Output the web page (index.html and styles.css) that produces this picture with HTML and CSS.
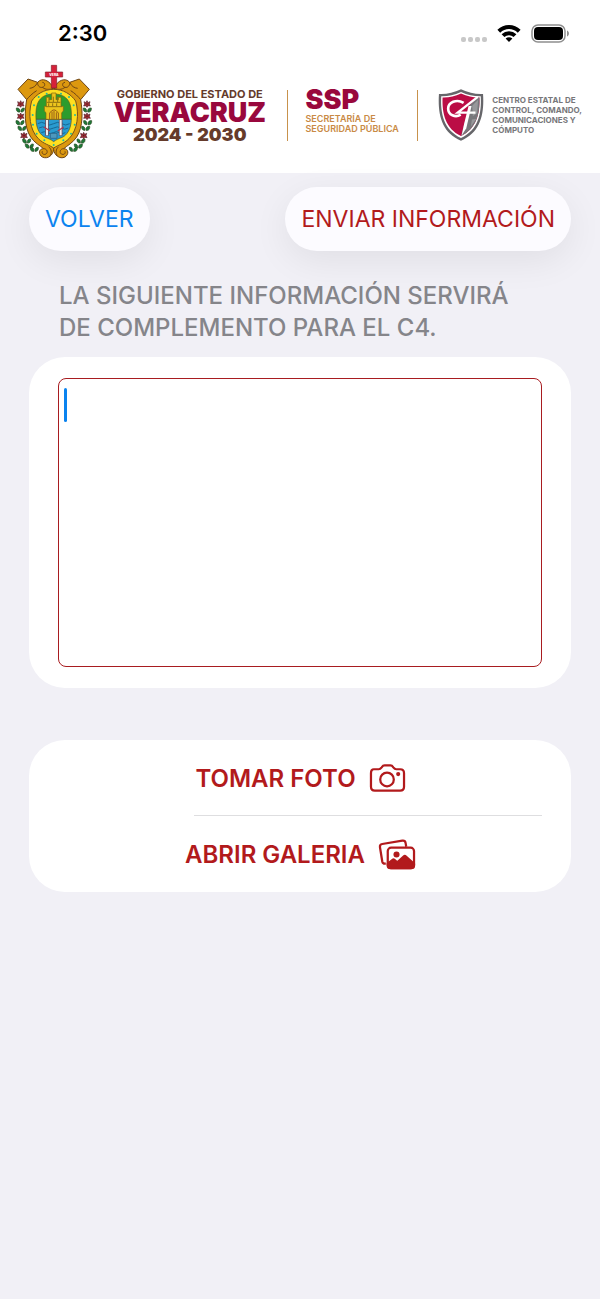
FILE: index.html
```html
<!DOCTYPE html>
<html lang="es">
<head>
<meta charset="utf-8">
<meta name="viewport" content="width=device-width, initial-scale=1">
<title>Información complementaria C4</title>
<link rel="stylesheet" href="styles.css">
</head>
<body>
<div class="top">
  <div class="status">
    <time class="clock">2:30</time>
    <div class="status-icons">
      <span class="dots"><i></i><i></i><i></i><i></i></span>
      <svg class="wifi" viewBox="0 0 24 19" aria-hidden="true">
        <g fill="none" stroke="#000" stroke-width="4">
          <path d="M1.8 7.2C7.6 1.5 16.4 1.5 22.2 7.2"/>
          <path d="M6 11.6c3.4-3.3 8.6-3.3 12 0"/>
        </g>
        <path d="M8.6 14.4c2-1.7 4.8-1.7 6.8 0L12 18z"/>
      </svg>
      <svg class="battery" viewBox="0 0 39 19" aria-hidden="true">
        <rect x="1" y="1" width="33" height="17" rx="6" fill="none" stroke="#8e8e8e" stroke-width="1.5"/>
        <rect x="3" y="3" width="29" height="13" rx="4"/>
        <path d="M36 6.5c2.6 1 2.6 5 0 6z" fill="#8e8e8e"/>
      </svg>
    </div>
  </div>
  <header class="brand">
    <svg class="crest" viewBox="45 27 234 288" role="img" aria-label="Escudo de Veracruz">
      <defs>
        <g id="flower">
          <path d="M0-10L3-4 9-7 7 0 10 6 3 5 0 10-4 5-10 6-7 0-9-7-3-4z" fill="#a32a35" stroke="#54202a" stroke-width="2"/>
          <circle r="2.5" fill="#4b2a20"/>
        </g>
        <g id="leaf">
          <path d="M-1 6C-9 8-13 2-12-6-5-7 0-3-1 6zM2 6C1-2 5-7 12-6 13 2 9 7 2 6z" fill="#1d7a38" stroke="#2c4a22" stroke-width="2"/>
        </g>
        <g id="garland">
          <use href="#flower" x="62" y="147"/><use href="#leaf" x="61" y="165"/>
          <use href="#flower" x="62" y="184"/><use href="#leaf" x="60" y="203"/>
          <use href="#leaf" x="66" y="220"/><use href="#flower" x="72" y="242"/>
          <use href="#leaf" x="80" y="258"/><use href="#leaf" x="88" y="273"/>
          <use href="#leaf" x="103" y="283"/>
        </g>
        <g id="frame">
          <path d="M160 100C150 76 126 66 113 82L84 72 54 103 80 134C74 168 72 216 92 246 103 263 120 272 131 281 115 281 115 299 127 306 143 314 160 300 161 283z" fill="#dc980f" stroke="#6e4515" stroke-width="3"/>
          <path d="M113 82c-1 9 5 17 14 15 10-2 9-15 0-15M113 82c-6 12-14 17-24 18M127 97c10 8 22 7 33 3M131 281c10 0 14 11 7 16-7 4-14-2-11-8M146 275c9 8 10 18 4 27M80 134c7-9 18-20 30-27" fill="none" stroke="#6e4515" stroke-width="3"/>
        </g>
      </defs>
      <use href="#garland"/>
      <use href="#garland" transform="translate(323 0) scale(-1 1)"/>
      <use href="#frame"/>
      <use href="#frame" transform="translate(322 0) scale(-1 1)"/>
      <path d="M154 99V66H136V51h18V31h16v20h18v15h-18v33z" fill="#d6213a" stroke="#84202b" stroke-width="2"/>
      <text x="162" y="62" class="crest-word">VERA</text>
      <path d="M161 103C132 103 110 117 95 138 84 177 89 225 115 251 131 267 148 270 161 279 174 270 191 267 207 251 233 225 238 177 227 138 212 117 190 103 161 103z" fill="#ffdf20" stroke="#77501b" stroke-width="3"/>
      <path d="M108 193C107 166 109 145 121 132 132 120 146 117 161 117s29 3 40 15c12 13 14 34 13 61z" fill="#2c9c2d" stroke="#5b5b20" stroke-width="2"/>
      <path d="M108 193h106c-1 30-13 47-27 54-11 4-19 7-26 13-7-6-15-9-26-13-14-7-26-24-27-54z" fill="#299bd0" stroke="#50501f" stroke-width="2"/>
      <path d="M113 206q12-8 24 0t24 0 24 0 24 0M117 219q11-7 22 0t22 0 22 0 22 0M124 233q9-6 18 0t18 0 18 0 18 0" fill="none" stroke="#166894" stroke-width="3"/>
      <path d="M138 193v-20l-5-5v-14h6v-27h9v7h7v-20h13v20h7v-7h8v27h7v14l-5 5v20z" fill="#edc51d" stroke="#80630e" stroke-width="2"/>
      <path d="M141 142h40M138 155h48M147 128v13m13-16v16m13-16v16M146 145v8m12-8v8m12-8v8" stroke="#8d7010" stroke-width="3" fill="none"/>
      <path d="M149 193v-19q13-19 26 0v19M156 193v-23m6 23v-25m7 25v-21" stroke="#975a17" stroke-width="3" fill="none"/>
      <path d="M141 194v48M182 194v48" stroke="#6e5364" stroke-width="11"/>
      <path d="M141 195v46M182 195v46" stroke="#eee" stroke-width="6"/>
      <path d="M132 216l18 12M191 216l-18 12" stroke="#b2384e" stroke-width="4"/>
      <path d="M151 235h20v15h-20z" fill="#4d98bd" stroke="#285878" stroke-width="2"/>
      <g fill="#21b9a1"><circle cx="140" cy="116" r="3"/><circle cx="183" cy="116" r="3"/><circle cx="116" cy="126" r="3"/><circle cx="207" cy="126" r="3"/><circle cx="102" cy="151" r="3"/><circle cx="221" cy="151" r="3"/><circle cx="98" cy="180" r="3"/><circle cx="225" cy="180" r="3"/><circle cx="99" cy="209" r="3"/><circle cx="224" cy="209" r="3"/><circle cx="110" cy="236" r="3"/><circle cx="213" cy="236" r="3"/><circle cx="133" cy="256" r="3"/><circle cx="190" cy="256" r="3"/><circle cx="161" cy="270" r="3"/></g>
    </svg>
    <div class="gov">
      <span class="gov-top">GOBIERNO DEL ESTADO DE</span>
      <strong class="gov-name">VERACRUZ</strong>
      <span class="gov-years">2024 - 2030</span>
    </div>
    <div class="ssp">
      <strong class="ssp-name">SSP</strong>
      <span>SECRETARÍA DE<br>SEGURIDAD PÚBLICA</span>
    </div>
    <div class="cfour">
      <svg class="shield" viewBox="35 41 138 158" role="img" aria-label="C4">
        <path d="M104 42Q138 58 171 56C175 116 164 174 104 198 44 174 33 116 37 56Q70 58 104 42z" fill="#66666a"/>
        <path d="M104 50Q136 64 164 63C167 115 157 165 104 190 51 165 41 115 44 63Q72 64 104 50z" fill="#fff"/>
        <path d="M104 55Q134 68 160 67C162 115 151 162 104 184 57 162 46 115 48 67Q76 68 104 55z" fill="#bb0d45"/>
        <path d="M160 67C162 115 151 162 104 184L118 134 130 90 154 67z" fill="#77777b"/>
        <path d="M138 92l18-18-3 40-13 10zM137 134l13-2-16 23z" fill="#98989b"/>
        <path d="M112 83C90 70 65 82 65 101s22 28 38 18" fill="none" stroke="#fff" stroke-width="8"/>
        <path d="M155 65L94 113h54" fill="none" stroke="#fff" stroke-width="7"/>
        <path d="M127 93h9l-16 67-14 22 8-38z" fill="#fff"/>
      </svg>
      <span>CENTRO ESTATAL DE<br>CONTROL, COMANDO,<br>COMUNICACIONES Y<br>CÓMPUTO</span>
    </div>
  </header>
</div>
<main>
  <nav class="actions">
    <button type="button" class="pill back">VOLVER</button>
    <button type="button" class="pill send">ENVIAR INFORMACIÓN</button>
  </nav>
  <label class="prompt" for="info">LA SIGUIENTE INFORMACIÓN SERVIRÁ DE COMPLEMENTO PARA EL C4.</label>
  <section class="card note">
    <textarea id="info"></textarea>
    <span class="caret" aria-hidden="true"></span>
  </section>
  <section class="card media">
    <button type="button" class="row">TOMAR FOTO
      <svg class="camera" viewBox="0 0 36 28" aria-hidden="true">
        <path d="M4 5h5c1.5 0 2-.6 3-2 .8-1.2 1.6-2 3-2h6c1.4 0 2.2.8 3 2 1 1.4 1.5 2 3 2h4c2.500 0 4 1.300 4 4v14c0 2.500-1.300 4-4 4H5c-2.700 0-4-1.400-4-4V9c0-2.600 1-4 3-4z"/>
        <circle cx="17.500" cy="15.500" r="7"/><circle class="solid" cx="29" cy="10" r="1"/>
      </svg>
    </button>
    <hr>
    <button type="button" class="row">ABRIR GALERIA
      <svg class="gallery" viewBox="0 0 37 31" aria-hidden="true">
        <path d="M7 25H6c-1.500 0-2.300-.7-2.600-2L1 8c-.3-2 .5-3 2.300-3.300L24 1.200c2-.3 3 .5 3.300 2.300l.7 4"/>
        <rect x="9" y="8.500" width="27" height="21" rx="3.500"/>
        <path class="solid" d="M9 25l5-4c.6-.5 1.200-.5 1.800 0l3 2.600 6.500-6c.8-.7 1.600-.7 2.400 0L36 25v2c0 1.500-1.500 2.500-3 2.500H12c-2 0-3-1-3-2.500z"/>
        <circle class="solid" cx="18" cy="15.500" r="2"/>
      </svg>
    </button>
  </section>
</main>
</body>
</html>
```

FILE: styles.css
```css
* { box-sizing: border-box; }
body {
  margin: 0;
  min-height: 100vh;
  background: #f1f0f6;
  font-family: Inter, "Liberation Sans", sans-serif;
}
button { border: 0; background: none; font: inherit; cursor: pointer; }

.top { background: #fff; }
.status {
  display: flex;
  align-items: center;
  justify-content: space-between;
  height: 64px;
  padding: 2px 30px 0 58px;
}
.clock { font-size: 22px; font-weight: 600; }
.status-icons { display: flex; align-items: center; gap: 10px; }
.dots { display: flex; gap: 2px; padding-top: 12px; }
.dots i { width: 5px; height: 5px; border-radius: 2px; background: #c8c8c8; }
.wifi { width: 24px; height: 19px; }
.battery { width: 39px; height: 19px; }

.brand {
  display: flex;
  align-items: flex-start;
  justify-content: space-between;
  padding: 0 18px 13px 15px;
  white-space: nowrap;
}
.crest { width: 78px; height: 96px; flex: none; }
.crest-word { font-size: 10px; font-weight: 800; fill: #fff; text-anchor: middle; }
.gov {
  display: flex;
  flex-direction: column;
  align-items: center;
  padding-top: 23px;
  color: #653b2b;
}
.gov-top { font-size: 11px; font-weight: 700; line-height: 14px; }
.gov-name { font-size: 27px; font-weight: 900; line-height: 24px; color: #99083d; }
.gov-years { font-size: 18px; font-weight: 900; line-height: 20px; }
.ssp {
  height: 51px;
  margin-top: 26px;
  padding: 0 18px;
  border: solid #c8924c;
  border-width: 0 1px;
  font-size: 9px;
  font-weight: 600;
  line-height: 10px;
  color: #c98a45;
}
.ssp-name { display: block; font-size: 27px; font-weight: 900; line-height: 20px; margin-bottom: 4px; color: #99083d; }
.cfour {
  display: flex;
  align-items: center;
  gap: 8px;
  padding-top: 25px;
  font-size: 8px;
  font-weight: 700;
  line-height: 10px;
  color: #77777a;
}
.shield { width: 46px; height: 52px; flex: none; }

main { padding: 14px 29px 40px; }
.actions { display: flex; justify-content: space-between; }
.pill {
  height: 64px;
  padding: 0 16px;
  border-radius: 32px;
  background: #fcfbff;
  box-shadow: 0 10px 36px rgba(0, 0, 0, .07);
  font-size: 23px;
}
.back { color: #0b83ef; }
.send { color: #b21a1c; }
.prompt {
  display: block;
  padding: 29px 30px 13px;
  font-size: 24px;
  font-weight: 500;
  line-height: 32px;
  color: #85858a;
}
.card { border-radius: 36px; background: #fff; }
.note { position: relative; padding: 21px 29px; }
textarea {
  display: block;
  width: 100%;
  height: 289px;
  padding: 8px;
  border: 1px solid #a81c20;
  border-radius: 8px;
  outline: 0;
  resize: none;
  background: #fff;
  font: 24px/32px Inter, sans-serif;
}
.caret {
  position: absolute;
  top: 31px;
  left: 35px;
  width: 3px;
  height: 34px;
  border-radius: 2px;
  background: #0b83ef;
}
.media { margin-top: 52px; }
.row {
  display: flex;
  align-items: center;
  justify-content: center;
  gap: 14px;
  width: 100%;
  height: 76px;
  padding: 0;
  font-size: 24px;
  font-weight: 600;
  color: #b21a1c;
}
.row svg { fill: none; stroke: currentColor; stroke-width: 2.3; stroke-linejoin: round; overflow: visible; }
.row .solid { fill: currentColor; }
.camera { width: 35px; height: 28px; }
.gallery { width: 36px; height: 31px; }
hr { height: 1px; margin: -1px 29px 0 165px; border: 0; background: #dedee0; }
```
